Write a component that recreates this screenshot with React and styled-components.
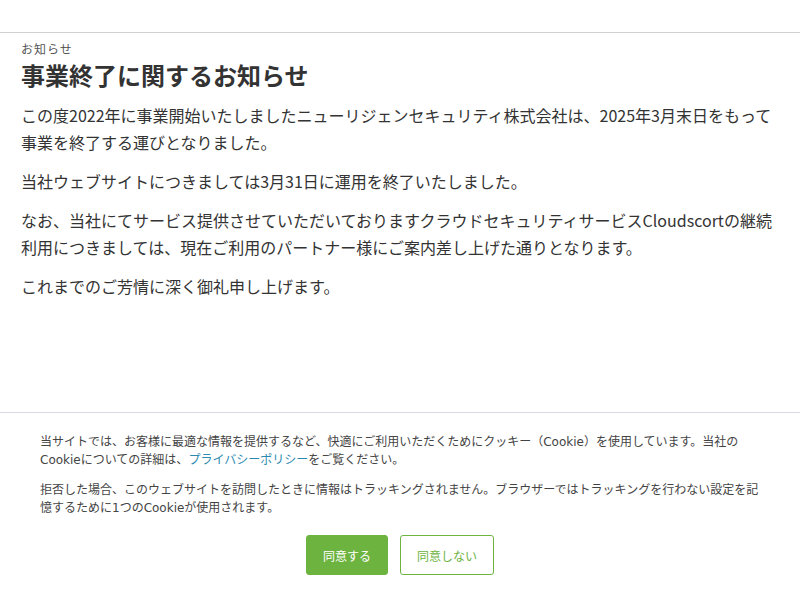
import React from "react";
import styled, { createGlobalStyle } from "styled-components";

const Global = createGlobalStyle`
  body {
    margin: 0;
    background: #fff;
    font-family: "Noto Sans CJK JP", "Noto Sans", sans-serif;
    color: #333;
  }
`

const Header = styled.header`
  height: 32px;
  border-bottom: 1px solid #d0d0d0;
`

const Main = styled.main`
  padding: 7px 21px 0 21px;
`

const Label = styled.div`
  font-size: 12px;
  line-height: 18px;
  letter-spacing: 1px;
  color: #555;
`

const Title = styled.h1`
  margin: 0 0 10px;
  font-size: 24px;
  line-height: 34px;
  font-weight: 700;
  color: #333;
`

const Para = styled.p`
  margin: 0 0 12px;
  font-size: 16px;
  line-height: 27px;
  color: #333;
`

const Banner = styled.div`
  position: fixed;
  left: 0;
  right: 0;
  bottom: 0;
  height: 188px;
  box-sizing: border-box;
  background: #fff;
  border-top: 1px solid #d8dce0;
  padding: 20px 40px 0;
  font-family: "DejaVu Sans", "Noto Sans CJK JP", sans-serif;
`

const BannerText = styled.p`
  margin: 0 0 12px;
  font-size: 12px;
  line-height: 18px;
  color: #444;
`

const Link = styled.a`
  color: #2a8ab0;
  text-decoration: none;
`

const Buttons = styled.div`
  display: flex;
  justify-content: center;
  gap: 12px;
  margin-top: 18px;
`

const Button = styled.button`
  height: 40px;
  padding: 0 16px;
  border-radius: 3px;
  border: 1px solid #6db33f;
  background: ${p => (p.$primary ? "#6db33f" : "#fff")};
  color: ${p => (p.$primary ? "#fff" : "#6db33f")};
  font-family: "DejaVu Sans", "Noto Sans CJK JP", sans-serif;
  font-size: 12px;
`

export default function App() {
  return (
    <>
      <Global />
      <Header />
      <Main>
        <Label>お知らせ</Label>
        <Title>事業終了に関するお知らせ</Title>
        <Para>この度2022年に事業開始いたしましたニューリジェンセキュリティ株式会社は、2025年3月末日をもって事業を終了する運びとなりました。</Para>
        <Para>当社ウェブサイトにつきましては3月31日に運用を終了いたしました。</Para>
        <Para>なお、当社にてサービス提供させていただいておりますクラウドセキュリティサービスCloudscortの継続利用につきましては、現在ご利用のパートナー様にご案内差し上げた通りとなります。</Para>
        <Para>これまでのご芳情に深く御礼申し上げます。</Para>
      </Main>
      <Banner>
        <BannerText>
          当サイトでは、お客様に最適な情報を提供するなど、快適にご利用いただくためにクッキー（Cookie）を使用しています。当社のCookieについての詳細は、<Link href="#">プライバシーポリシー</Link>をご覧ください。
        </BannerText>
        <BannerText>
          拒否した場合、このウェブサイトを訪問したときに情報はトラッキングされません。ブラウザーではトラッキングを行わない設定を記憶するために1つのCookieが使用されます。
        </BannerText>
        <Buttons>
          <Button $primary>同意する</Button>
          <Button>同意しない</Button>
        </Buttons>
      </Banner>
    </>
  );
}
